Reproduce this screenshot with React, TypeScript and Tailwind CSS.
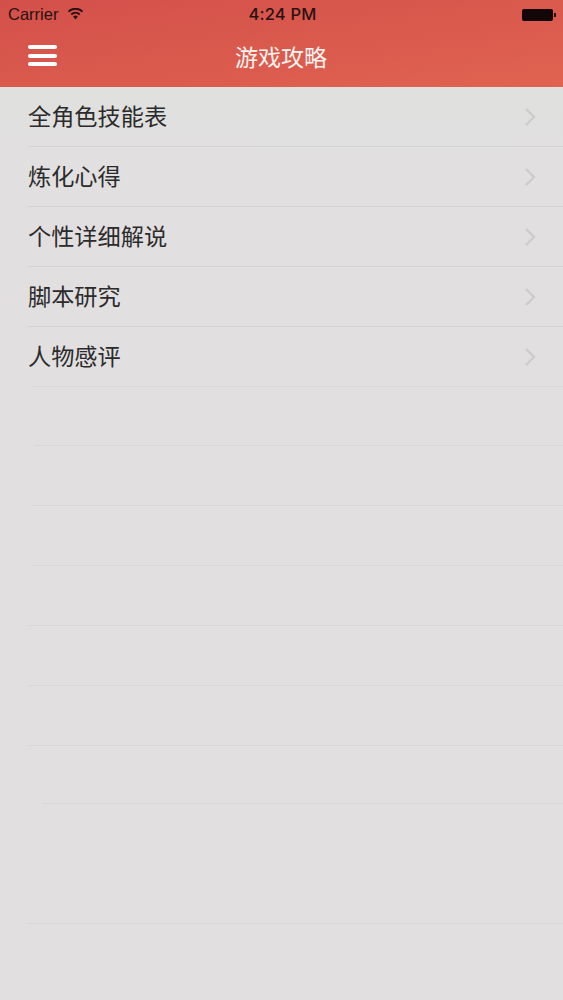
const items = ["全角色技能表", "炼化心得", "个性详细解说", "脚本研究", "人物感评"];

// empty rows under the list: height and left edge of each separator
const emptyRows = [
    { h: "h-[59px]", left: "ml-[34px]" },
    { h: "h-[60px]", left: "ml-[31px]" },
    { h: "h-[60px]", left: "ml-[32px]" },
    { h: "h-[60px]", left: "ml-[28px]" },
    { h: "h-[60px]", left: "ml-[28px]" },
    { h: "h-[60px]", left: "ml-[28px]" },
    { h: "h-[58px]", left: "ml-[42px]" },
    { h: "h-[120px]", left: "ml-[28px]" },
];

export default function App() {
    return (
        <div
            className="w-[563px] h-[1000px] overflow-hidden bg-[#e2dfe0]"
            style={{ fontFamily: '"Liberation Sans", "Noto Sans CJK SC", sans-serif' }}
        >
            <div className="h-[87px] bg-gradient-to-br from-[#d3504a] to-[#e06351]">
                <div className="h-[29px] flex items-center justify-between pl-[8px] pr-[7px] text-[#2a1110] text-[16.5px]">
                    <div className="flex items-center gap-[9px] w-[120px]">
                        <span>Carrier</span>
                        <svg width="17" height="12" viewBox="0 0 16 12" className="-mt-[2px]">
                            <path d="M8 11.5 5.6 8.6a3.6 3.6 0 0 1 4.8 0z" fill="#2a1110" />
                            <path d="M3.8 6.4a6.2 6.2 0 0 1 8.4 0" stroke="#2a1110" strokeWidth="2" fill="none" />
                            <path d="M1 3.6a10 10 0 0 1 14 0" stroke="#2a1110" strokeWidth="2" fill="none" />
                        </svg>
                    </div>
                    <span className="font-medium text-[16.5px] tracking-[0.2px] text-[#2a1110] font-['Inter'] ml-[1px]">4:24 PM</span>
                    <div className="w-[120px] flex justify-end items-center">
                        <div className="w-[31px] h-[12px] rounded-[2px] bg-[#120606]" />
                        <div className="w-[2px] h-[4px] bg-[#2a1110] ml-[1px]" />
                    </div>
                </div>
                <div className="relative h-[58px] flex items-center justify-center">
                    <div className="absolute left-[28px] top-[16px] w-[29px] flex flex-col gap-[4.5px]">
                        <div className="h-[4px] rounded-full bg-white" />
                        <div className="h-[4px] rounded-full bg-white" />
                        <div className="h-[4px] rounded-full bg-white" />
                    </div>
                    <span className="text-[23px] text-[#fdf3f0] leading-none -ml-[1px]">游戏攻略</span>
                </div>
            </div>

            <div className="bg-gradient-to-b from-[#e0e0df] to-[#e2dfe0] to-[120px]">
                {items.map((item, i) => (
                    <div key={item} className="h-[60px] pl-[28px] flex flex-col">
                        <div className="flex-1 flex items-center justify-between pr-[27px]">
                            <span className="text-[23.2px] text-[#2b2b2b] leading-none pt-[2px]">{item}</span>
                            <svg width="12" height="20" viewBox="0 0 12 20">
                                <path d="M2 2l8 8-8 8" fill="none" stroke="#cbcbcb" strokeWidth="2.2" />
                            </svg>
                        </div>
                        <div className={i === items.length - 1 ? "h-px bg-[#d8d6d6] ml-[4px]" : "h-px bg-[#d4d3d3]"} />
                    </div>
                ))}
            </div>

            {emptyRows.map((row, i) => (
                <div key={i} className={`${row.h} flex flex-col justify-end`}>
                    <div className={`h-px bg-[#d8d6d6] ${row.left}`} />
                </div>
            ))}
        </div>
    );
}
